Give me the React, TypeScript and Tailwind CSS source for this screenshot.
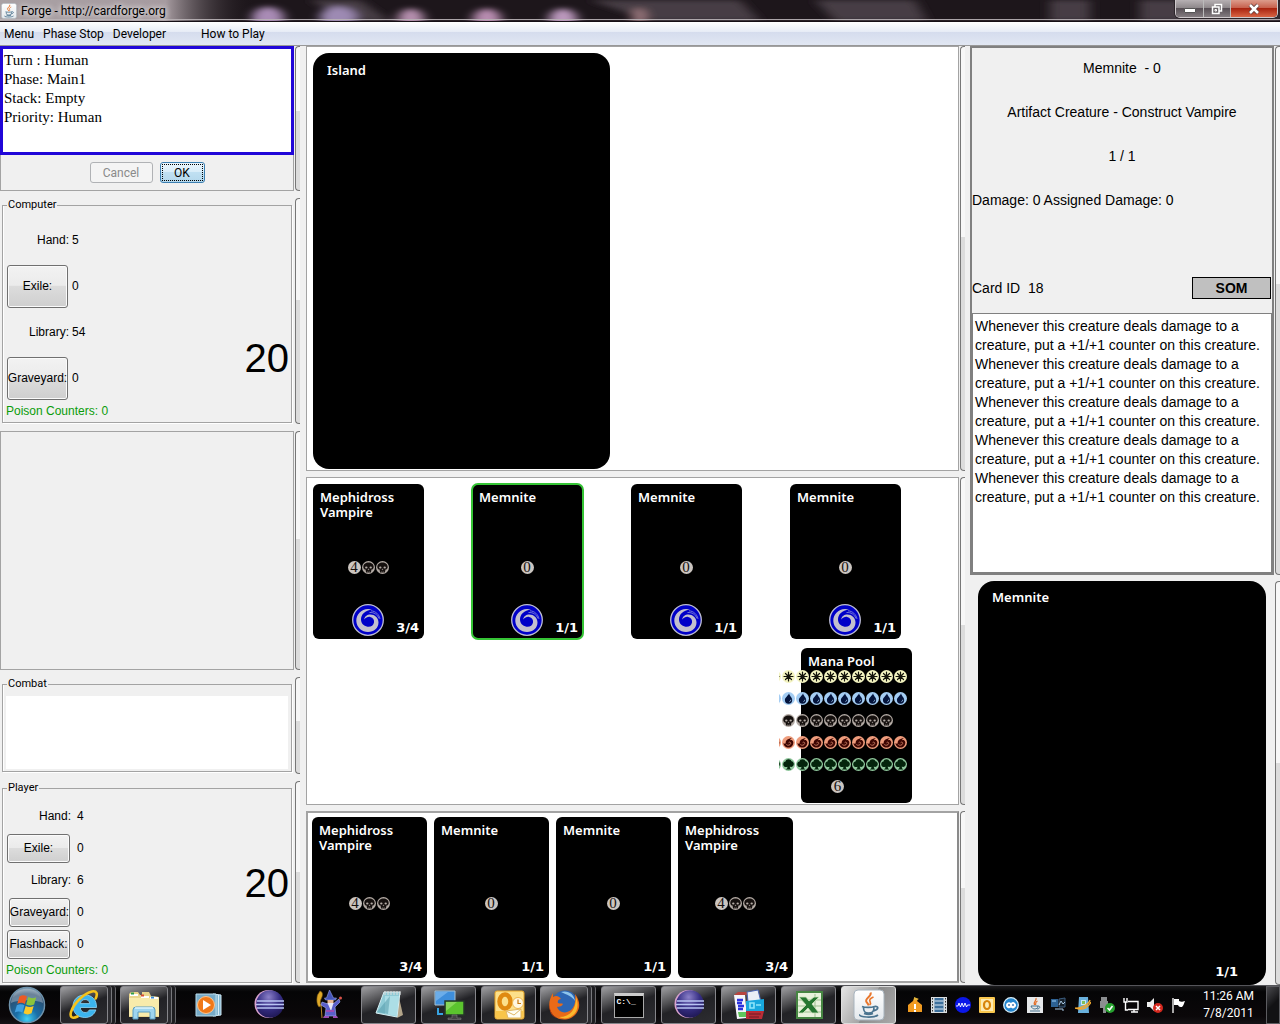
import React from "react";

type ManaKind = "W" | "U" | "B" | "R" | "G";

const MANA_COLORS: Record<ManaKind, { bg: string; fg: string }> = {
  W: { bg: "#f3f3c0", fg: "#14140c" },
  U: { bg: "#a4cdf3", fg: "#04143c" },
  B: { bg: "#b3aaa4", fg: "#15100e" },
  R: { bg: "#ee9c7c", fg: "#3c0602" },
  G: { bg: "#8fc79c", fg: "#04240c" },
};

function ManaIcon({ kind }: { kind: ManaKind }) {
  const { bg, fg } = MANA_COLORS[kind];
  return (
    <svg viewBox="0 0 14 14" className="h-3.5 w-3.5 shrink-0" aria-label={kind}>
      <circle cx="6.5" cy="6.5" r="6.5" fill={bg} />
      <g transform="translate(-.5 -.5)">
        {kind === "W" && (
          <g stroke={fg} strokeWidth="1.2" strokeLinecap="round">
            <path d="M7 2.500v9M2.500 7h9M4 4l6 6M10 4l-6 6" />
            <circle cx="7" cy="7" r="2" fill={fg} stroke="none" />
          </g>
        )}
        {kind === "U" && (
          <g>
            <path d="M7.600 1.800C7.500 4 10.700 5.700 10.700 8.500A3.600 3.600 0 0 1 3.400 8.500C3.400 5.900 6.700 4.500 7.600 1.800z" fill={fg} />
            <path d="M9.300 8.200q0 1.700-1.500 2" stroke={bg} strokeWidth=".7" fill="none" />
          </g>
        )}
        {kind === "B" && (
          <g>
            <path d="M7 2C4 2 1.800 3.800 1.800 6.400c0 1.600.8 2.400 2.200 2.700l.6 2.900h4.800L10 9.100c1.400-.3 2.200-1.100 2.200-2.700C12.200 3.800 10 2 7 2z" fill={fg} />
            <ellipse cx="4.800" cy="7" rx="1.200" ry=".9" fill={bg} />
            <ellipse cx="9.200" cy="7" rx="1.200" ry=".9" fill={bg} />
            <path d="M7 8.300l-.5.900h1zM6.200 10.600v1.300M7.800 10.600v1.300" fill={bg} stroke={bg} strokeWidth=".4" />
          </g>
        )}
        {kind === "R" && (
          <g>
            <path d="M11.800 6.500C12 10 9.900 12 7 12S2 10.200 2 7.500c1 .9 1.700.8 2.200.2C4 4.900 6 3.200 10.700 2.200 9 3.200 8.600 4 8.600 4.800c1.300-.6 2.400-.2 3.200 1.700z" fill={fg} />
            <path d="M4.800 9c1.500 1.300 3.900.9 4.400-1 .3-1.300-1.500-1.900-2.100-.8" stroke={bg} strokeWidth=".7" fill="none" />
          </g>
        )}
        {kind === "G" && (
          <path
            d="M7 1.700c1.600 0 2.600.7 3 2 1.400.2 2.400 1.400 2.300 2.900 0 1.700-1.200 2.900-2.800 2.900l-1.200-.4.2 1.600 1.400 1.300H4.300l1.500-1.300.1-1.500C5.200 9.700 4.600 9.600 3.900 9.500 2.500 9.300 1.700 8.200 1.700 6.800c0-1.600.9-2.700 2.300-2.900C4.300 2.500 5.400 1.700 7 1.700z"
            fill={fg}
          />
        )}
      </g>
    </svg>
  );
}

function GenericMana({ n }: { n: number }) {
  return (
    <span className="mr-px flex h-[13px] w-[13px] shrink-0 items-center justify-center rounded-full bg-[#cbc5c0] font-['Liberation_Serif',serif] text-[15px] leading-[13px] font-normal text-[#15100e]">
      {n}
    </span>
  );
}

function Swirl() {
  return (
    <svg viewBox="0 0 32 32" className="mr-px h-8 w-8" aria-label="Summoning sickness">
      <circle cx="16" cy="16" r="15.300" fill="#0000c8" stroke="#bdbdd4" strokeWidth="1.300" />
      <path
        d="M20 5.500C11 3 4 9.500 4.300 17 4.600 23.500 10 28 16 28c6 0 10.500-4 10.500-9.500 0-5-4-8-8-8-3.500 0-6 2-6.300 5 1.800-2.300 4-3 6-2.600 2.800.6 4.300 2.800 3.800 5.600-.5 3-3.300 4.700-6.500 4.200C11.500 22 9 19 9 15.500 9 10.500 13 6.300 20 5.500z"
        fill="#c3c0cf"
      />
      <path d="M19 6.800c4.500.3 8 3.500 9 8M17.500 8.500c4.500-.3 8 2 9.500 6" stroke="#8f90dd" strokeWidth=".8" fill="none" />
    </svg>
  );
}

type CardProps = {
  name: string;
  generic?: number;
  black?: number;
  pt?: string;
  sick?: boolean;
  selected?: boolean;
  size: string;
};

function Card({ name, generic, black = 0, pt, sick, selected, size }: CardProps) {
  return (
    <article
      className={`relative shrink-0 rounded-md bg-black px-[7px] py-1.5 font-['Noto_Sans',sans-serif] text-[13px] leading-[15px] font-semibold text-white ${size} ${
        selected ? "outline-2 -outline-offset-1 outline-[#35c435]" : ""
      }`}
    >
      <h3 className="w-24">{name}</h3>
      {generic !== undefined && (
        <div className="absolute inset-x-0 top-1/2 flex justify-center">
          <span className="-mt-px flex">
            <GenericMana n={generic} />
            {Array.from({ length: black }, (_, i) => (
              <ManaIcon key={i} kind="B" />
            ))}
          </span>
        </div>
      )}
      {sick && (
        <div className="absolute inset-x-0 bottom-[3px] flex justify-center">
          <Swirl />
        </div>
      )}
      {pt && <div className="absolute right-[5px] bottom-1 font-['DejaVu_Sans',sans-serif] text-[13px]">{pt}</div>}
    </article>
  );
}

const POOL: ManaKind[] = ["W", "U", "B", "R", "G"];

function ManaPool() {
  return (
    <div className="relative">
      <Card name="Mana Pool" size="h-[155px] w-[111px]" />
      <div className="absolute top-[22px] right-1 flex w-[129px] flex-col gap-2">
        {POOL.map((k) => (
          <div key={k} className={`flex justify-end overflow-hidden ${k === "B" ? "pr-3.5" : ""}`}>
            {Array.from({ length: k === "B" ? 8 : 10 }, (_, i) => (
              <ManaIcon key={i} kind={k} />
            ))}
          </div>
        ))}
        <div className="flex pl-[52px]">
          <GenericMana n={6} />
        </div>
      </div>
    </div>
  );
}

function Splitter() {
  return (
    <div className="w-[5px] shrink-0 rounded-l-sm border-y border-l border-[#777] bg-[linear-gradient(#f7f7f7_45%,#dcdcdc_45%)]" />
  );
}

function Panel({ grow, children }: { grow: string; children: React.ReactNode }) {
  return (
    <section className={`flex min-h-0 gap-px ${grow}`}>
      <div className="flex min-w-0 flex-1 flex-col">{children}</div>
      <Splitter />
    </section>
  );
}

function Group({ title, children }: { title: string; children?: React.ReactNode }) {
  return (
    <fieldset className="mr-[2px] ml-0.5 flex min-h-0 min-w-0 flex-1 flex-col border border-[#a3a3a3] shadow-[inset_1px_0_white,1px_1px_white]">
      <legend className="ml-1 px-px font-['Roboto',sans-serif] text-[11px] leading-[14px]">{title}</legend>
      {children}
    </fieldset>
  );
}

const SWING_BTN =
  "rounded-[3px] border border-[#707070] bg-[linear-gradient(#f2f2f2,#ebebeb_47%,#dcdcdc_50%,#cfcfcf)] shadow-[inset_0_0_0_1px_#fbfbfb] whitespace-nowrap";

type Stat = { label: string; value: number; button?: boolean; narrow?: boolean };

function Stats({ stats, tall }: { stats: Stat[]; tall?: boolean }) {
  return (
    <div className="relative flex min-h-0 flex-1 justify-between">
      <div className="flex flex-1 flex-col pt-[5px] pl-1 text-[12px]">
        {stats.map((s) => (
          <div key={s.label} className={`flex items-center ${tall ? "h-[46px] gap-[3px]" : "h-8 gap-1.5"}`}>
            <div className={`flex justify-end ${tall ? "w-[62px]" : "w-16"}`}>
              {s.button ? (
                <button
                  className={`${SWING_BTN} ${tall ? "mr-px h-[43px] w-[61px]" : s.narrow ? "mr-px h-[29px] w-[61px]" : "mr-px h-[29px] w-[63px]"}`}
                >
                  <span className="-mx-1">{s.label}</span>
                </button>
              ) : (
                <span>{s.label}</span>
              )}
            </div>
            <span>{s.value}</span>
          </div>
        ))}
        <div className="-ml-px text-[12px] leading-5 text-[#0a9c0a]">Poison Counters: 0</div>
      </div>
      <div className={`pr-0.5 text-[40px] leading-10 ${tall ? "mb-11 self-end" : "mb-3 self-center"}`}>20</div>
    </div>
  );
}

function TitleBar() {
  return (
    <header className="relative flex h-[22px] shrink-0 items-center overflow-hidden border-b border-[#171016] bg-[#1d161b] font-['Roboto',sans-serif]">
      <svg className="absolute inset-0 h-full w-full" viewBox="0 0 1280 22" preserveAspectRatio="none" aria-hidden="true">
        <defs>
          <filter id="haze" x="-20%" y="-100%" width="140%" height="300%">
            <feGaussianBlur stdDeviation="6 3" />
          </filter>
          <linearGradient id="titleGlow">
            <stop offset="0" stopColor="#a9a1a4" />
            <stop offset=".65" stopColor="#a69ba0" />
            <stop offset="1" stopColor="#1d161b" stopOpacity="0" />
          </linearGradient>
        </defs>
        <g filter="url(#haze)">
          <path d="M310 0h50l30 22h-40zM590 0h150l20 22H650zM815 0h100l12 22H835zM1050 0h40v22h-40zM1140 0h140v22h-140z" fill="#463d44" />
          <ellipse cx="268" cy="19" rx="16" ry="12" fill="#a98bb5" />
          <ellipse cx="338" cy="18" rx="18" ry="11" fill="#9d8ab3" />
          <ellipse cx="411" cy="20" rx="13" ry="11" fill="#b58fae" />
          <ellipse cx="487" cy="20" rx="14" ry="11" fill="#b88cb0" />
          <ellipse cx="563" cy="20" rx="14" ry="11" fill="#bb98bd" />
          <ellipse cx="639" cy="18" rx="7" ry="10" fill="#98767c" />
        </g>
        <rect width="255" height="22" fill="url(#titleGlow)" />
        <path d="M0 20.500h1280" stroke="#b9b2b6" />
      </svg>
      <div className="relative flex flex-1 items-center gap-1 pl-px">
        <JavaIcon cls="h-4 w-4" />
        <h1 className="text-[12px] leading-4 text-black [text-shadow:0_0_6px_white,0_0_6px_#fff8]">Forge - http://cardforge.org</h1>
      </div>
      <div className="relative mr-0.5 flex h-[18px] self-start overflow-hidden rounded-b-[5px] border border-t-0 border-[#cfc9cc] shadow-[0_0_0_1px_#2c252a]">
        <button aria-label="Minimize" className="flex w-7 items-center justify-center border-r border-[#bbb] bg-[linear-gradient(#b6b0b3,#8a8487_50%,#585056_50%,#837c80)]">
          <span className="mt-1 h-[5px] w-3 rounded-[1px] border border-[#555] bg-white" />
        </button>
        <button aria-label="Restore" className="flex w-[27px] items-center justify-center border-r border-[#bbb] bg-[linear-gradient(#b6b0b3,#8a8487_50%,#585056_50%,#837c80)]">
          <svg viewBox="0 0 12 12" className="h-3 w-3" fill="#6a6468" stroke="white" strokeWidth="1.500">
            <path d="M4 1.500h6.500v6.500H4z" />
            <path d="M1.500 4h6.500v6.500H1.500z" />
            <path d="M4 6.500h1.500v1.500H4z" strokeWidth="1" />
          </svg>
        </button>
        <button aria-label="Close" className="flex w-[46px] items-center justify-center bg-[linear-gradient(#dc9c8c,#c65e4a_48%,#a92410_50%,#d86444)]">
          <svg viewBox="0 0 12 12" className="h-3 w-3">
            <path d="M2 2l8 8M10 2l-8 8" stroke="#5b3a38" strokeWidth="4" />
            <path d="M2 2l8 8M10 2l-8 8" stroke="white" strokeWidth="2.500" />
          </svg>
        </button>
      </div>
    </header>
  );
}

function JavaIcon({ cls }: { cls: string }) {
  return (
    <svg viewBox="0 0 32 32" className={cls} aria-hidden="true">
      <defs>
        <linearGradient id="javaTile" x2="0" y2="1">
          <stop offset="0" stopColor="#fff" />
          <stop offset="1" stopColor="#e3e8ec" />
        </linearGradient>
      </defs>
      <rect x="1" y="1" width="30" height="30" rx="4" fill="url(#javaTile)" stroke="#a8b4be" />
      <path d="M17.500 3.500c2 4-6.500 5.500-4 9.500.6 1 1.600 1.800 2.200 3.500" stroke="#e8762c" strokeWidth="2" fill="none" />
      <path d="M20.500 8c-3.500 1.500-4.600 3-3.300 5 .6 1 .5 2-.6 3" stroke="#e8762c" strokeWidth="1.600" fill="none" />
      <path d="M9 17.500c3 1.300 9.500 1.200 12.500 0M10.500 18.500c0 5 2 5.500 5 5.500s5.500-.5 5.500-5.500M21.500 17.500c4.500-.8 4.500 3-1 4.500M11 24.500c3 1 6.500 1 9 0M7 25.500c-2 2.800 14 3.700 18 .5" stroke="#4b748f" strokeWidth="1.700" fill="none" />
    </svg>
  );
}

const MENUS = ["Menu", "Phase Stop", "Developer"];

function MenuBar() {
  return (
    <nav className="flex h-6 shrink-0 items-center border-b border-[#989898] bg-[linear-gradient(#fff,#e7ecf6_42%,#d5dced_43%,#e1e7f3)] pl-1 font-['Roboto',sans-serif] text-[12px]">
      <div className="flex flex-1 gap-[9px]">
        {MENUS.map((m) => (
          <button key={m}>{m}</button>
        ))}
        <button className="ml-[26px]">How to Play</button>
      </div>
    </nav>
  );
}

/* ---------- taskbar icons ---------- */

const BIG = "h-8 w-8";

const StartOrb = () => (
  <svg viewBox="0 0 40 40" className="h-[38px] w-[38px]" aria-hidden="true">
    <defs>
      <radialGradient id="orb" cx=".5" cy=".9" r=".9">
        <stop offset="0" stopColor="#3fd0f4" />
        <stop offset=".35" stopColor="#1a6fa8" />
        <stop offset=".8" stopColor="#2c4c6c" />
        <stop offset="1" stopColor="#8ba7bb" />
      </radialGradient>
    </defs>
    <circle cx="20" cy="20" r="18.500" fill="url(#orb)" stroke="#6f93ac" strokeWidth="1.500" />
    <path d="M3 18C4 8 11 3 20 3s16 5 17 15c-8-4-26-4-34 0z" fill="#fff" opacity=".3" />
    <path d="M12 11c3-1.800 5.500-1.500 8 .1l-2.200 7.800c-2.700-1.600-5-1.700-8-.1z" fill="#ec5a24" />
    <path d="M21.300 11.700c3 1.700 5.500 1.500 8.400.1l-2.200 7.700c-3 1.500-5.500 1.400-8.400-.1z" fill="#8cc43c" />
    <path d="M9.300 20.200c3-1.600 5.400-1.400 8 .1l-2.200 7.700c-2.600-1.600-5-1.700-8-.1z" fill="#3f9fe0" />
    <path d="M18.600 21c3 1.700 5.500 1.500 8.400.1l-2.200 7.700c-3 1.500-5.500 1.400-8.400-.1z" fill="#fbc927" />
  </svg>
);

const IeIcon = () => (
  <svg viewBox="0 0 32 32" className={BIG}>
    <path d="M28.500 18.500H12.300c.3 3.200 2 5 4.800 5 2 0 3.500-.9 4.300-2.600h6.500c-1.700 5-5.500 7.600-11 7.600C9.800 28.500 5 24 5 17.300 5 10.700 9.800 6 16.800 6c7.300 0 12 4.700 11.700 12.500zM12.400 14.600h9.300c-.3-2.600-2-4.100-4.600-4.100s-4.300 1.500-4.700 4.100z" fill="#3bb4ee" stroke="#8fd6f7" strokeWidth=".8" />
    <path d="M27.700 9.500C30 4.500 28.500 1.500 24 2.500 16 4.200 5.500 14.500 3 23c-1.500 5.500 1.500 7 6.500 4.500" stroke="#f5c21b" strokeWidth="2.600" fill="none" strokeLinecap="round" />
  </svg>
);

const ExplorerIcon = () => (
  <svg viewBox="0 0 34 32" className="h-8 w-[34px]">
    <path d="M2 28V5l2-2h7l2 3h2V3h7l2 4h2V7l6 1v20z" fill="#ead58c" />
    <path d="M2 9h30v18H2z" fill="#f8ebab" />
    <path d="M3 6h8M14 8h8M23 9h8" stroke="#fff" strokeWidth="2" />
    <path d="M4 4.500h3" stroke="#2e9c4c" strokeWidth="2" />
    <path d="M14 6.500h3" stroke="#d84b31" strokeWidth="2" />
    <path d="M24 8.500h3" stroke="#3a8bd3" strokeWidth="2" />
    <path d="M6 30V21q0-3 3-3h16q3 0 3 3v9h-5v-7H11v7z" fill="#9ed5ef" stroke="#5a9dc2" />
    <path d="M8 19h18" stroke="#def4fd" strokeWidth="1.500" />
  </svg>
);

const WmpIcon = () => (
  <svg viewBox="0 0 28 28" className="h-7 w-7">
    <path d="M18 3l8 1v20l-8 1z" fill="#86b8d2" stroke="#cfe8f4" />
    <path d="M1 3h20v22H1z" fill="#77abc8" stroke="#b9dcec" />
    <path d="M23.500 4v20" stroke="#d8eef8" />
    <circle cx="11" cy="14" r="8.500" fill="#f07818" stroke="#ffc48e" />
    <path d="M8 9l8 5-8 5z" fill="#fff" />
  </svg>
);

const EclipseIcon = () => (
  <svg viewBox="0 0 32 32" className={BIG}>
    <defs>
      <radialGradient id="moon" cx=".45" cy=".25" r=".8">
        <stop offset="0" stopColor="#8b80c8" />
        <stop offset=".5" stopColor="#372f85" />
        <stop offset="1" stopColor="#1c154f" />
      </radialGradient>
    </defs>
    <circle cx="15.500" cy="15" r="14" fill="#d9a3cf" />
    <circle cx="17" cy="15" r="13.800" fill="url(#moon)" />
    <path d="M4 12h27M3 15.500h28M4 19h27" stroke="#b8c4f2" strokeWidth="1.300" />
  </svg>
);

const WizardIcon = () => (
  <svg viewBox="0 0 28 32" className="h-8 w-7">
    <path d="M5 2c3 1 3 4 1.500 7S5 14 6 17l-2 1C1.500 15 1.500 10 2.500 6z" fill="#dea928" stroke="#7d5a12" strokeWidth=".6" />
    <path d="M6 15l1 14" stroke="#b8882a" strokeWidth="1" />
    <path d="M14.500 1l4 8h3l-1 2H10.500l-1-2h2z" fill="#4454b9" stroke="#96a4ec" strokeWidth=".6" />
    <path d="M12.500 11h6v4h-6z" fill="#edb995" />
    <path d="M7 13l6 2h5l6-5 1 3-5 5 1 9H10l1-8-5-3z" fill="#5a5fcb" stroke="#a5b1f3" strokeWidth=".6" />
    <path d="M12.500 14h6l-2.500 8z" fill="#e8e8f6" />
    <path d="M11 21h8v2h-8zM9 27h5v2H8zM18 27h4l1 2h-5z" fill="#9e4cb2" />
    <circle cx="25.500" cy="9" r="1.500" fill="#d8534a" />
  </svg>
);

const NotepadIcon = () => (
  <svg viewBox="0 0 32 32" className={BIG}>
    <path d="M25 4l5 22-6 3z" fill="#b3a58a" />
    <path d="M11 3h16l-3 25L3 24z" fill="#8fcbd6" stroke="#d7eff3" />
    <path d="M12 7h14l-2 20-12-2z" fill="#b8e6ed" opacity=".7" />
    <path d="M17 7L4 23l11 2z" fill="#4d96a5" opacity=".5" />
    <path d="M12 2v4M15 2v4M18 2v4M21 2v4M24 2v4M27 2v4" stroke="#ddd" />
  </svg>
);

const MonitorsIcon = () => (
  <svg viewBox="0 0 32 32" className={BIG}>
    <path d="M2 2h20v14H2z" fill="#3e8edb" stroke="#a7c0cf" />
    <path d="M3 3h12L3 12z" fill="#8bc2f1" opacity=".6" />
    <path d="M12 12h19v14H12z" fill="#5bc42e" stroke="#26372a" strokeWidth="1.500" />
    <path d="M13 13h11L13 22z" fill="#a5e576" opacity=".6" />
    <path d="M19 26h5v3h4v1.500H15V29h4z" fill="#444" stroke="#888" strokeWidth=".5" />
    <path d="M5 19v6h5" stroke="#37a3e2" strokeWidth="2" fill="none" />
  </svg>
);

const OutlookIcon = () => (
  <svg viewBox="0 0 32 32" className={BIG}>
    <rect x="2" y="2" width="29" height="28" rx="2" fill="#fce08a" stroke="#e7a323" />
    <path d="M3 22h27v7H3z" fill="#f9c549" />
    <ellipse cx="12" cy="12.500" rx="5.500" ry="7" fill="none" stroke="#e08a10" strokeWidth="4.500" />
    <circle cx="25" cy="14" r="5.500" fill="#fff7e2" stroke="#edb44c" />
    <path d="M25 10.500v4h3" stroke="#c8760d" strokeWidth="1.200" fill="none" />
    <path d="M13 22l15-2v9H15z" fill="#fffdf4" stroke="#e0b665" />
    <path d="M13 22l8 4 7-6" stroke="#e0b665" fill="none" />
  </svg>
);

const FirefoxIcon = () => (
  <svg viewBox="0 0 32 32" className={BIG}>
    <circle cx="17" cy="14" r="12.500" fill="#2d66b4" />
    <path d="M13 3c7-2 13 2 14 9-3-5-8-6-14-9z" fill="#8ec5ec" />
    <path d="M27 5c7 9 5 19-4 24-9 4-18 0-21-8-2-6 0-12 3-17v4c3-2 6-1 8 2-2 0-4 2-3 4 2 1 4 0 5 1-2 4-5 2-6 3 2 6 9 7 14 3 4-4 5-9 4-16z" fill="#e96a18" />
    <path d="M28 8c3 7 2 15-4 19-4 3-9 3-13 1 12 0 17-8 17-20z" fill="#fbb92e" />
    <path d="M2 14c-1 7 2 12 7 15-5-1-9-7-7-15z" fill="#b83a10" />
  </svg>
);

const CmdIcon = () => (
  <span className="block h-[25px] w-[30px] border border-[#aaa] border-t-[3px] border-t-[#ccc] bg-black pt-0.5 pl-0.5 text-left font-['Liberation_Mono',monospace] text-[8px] leading-[8px] font-bold text-white">
    C:\_
  </span>
);

const PackIcon = () => (
  <svg viewBox="0 0 34 32" className="h-8 w-[34px]">
    <path d="M2 6l4-3h20l-4 3z" fill="#b8453f" />
    <path d="M2 6h11l2 23-10 1z" fill="#f5f5fa" />
    <path d="M15 3l11-2 3 12H16z" fill="#e9eef6" stroke="#4b66b5" />
    <path d="M14 12l18-2v12H14z" fill="#18a7dd" />
    <path d="M14 22h18l-2 8H14z" fill="#ba2c36" />
    <path d="M5 11h6M5 14h5M6 17h6M6 20h5" stroke="#2b33dd" strokeWidth="2.500" />
    <path d="M6 23h8v5H7z" fill="#5fc65b" />
    <path d="M18 14h4v5h-4zM24 16h5" stroke="#8fe6fa" strokeWidth="1.600" fill="none" />
    <path d="M17 25h12M17 28h10" stroke="#6f1a24" strokeWidth="1" />
  </svg>
);

const ExcelIcon = () => (
  <svg viewBox="0 0 32 32" className={BIG}>
    <path d="M4 3h25v26H4z" fill="#e9f2dc" stroke="#468542" strokeWidth="2" />
    <path d="M22 5v23M5 11h23M5 17h23M5 23h23" stroke="#9dbf8f" />
    <path d="M6 8h7l3 4 5-4h5l-7 7 7 9h-7l-4-5-5 5H5l8-8z" fill="#25762f" stroke="#cfe4bd" strokeWidth=".8" />
  </svg>
);

type Task = { label: string; icon: React.ReactNode; open?: boolean; stacked?: boolean; active?: boolean };

const TASKS: Task[] = [
  { label: "Internet Explorer", icon: <IeIcon />, open: true, stacked: true },
  { label: "Windows Explorer", icon: <ExplorerIcon />, open: true, stacked: true },
  { label: "Media Player", icon: <WmpIcon /> },
  { label: "Eclipse", icon: <EclipseIcon /> },
  { label: "Wizard", icon: <WizardIcon /> },
  { label: "Notepad", icon: <NotepadIcon />, open: true },
  { label: "Remote Desktop", icon: <MonitorsIcon />, open: true },
  { label: "Outlook", icon: <OutlookIcon />, open: true },
  { label: "Firefox", icon: <FirefoxIcon />, open: true, stacked: true },
  { label: "Command Prompt", icon: <CmdIcon />, open: true },
  { label: "Eclipse workspace", icon: <EclipseIcon />, open: true },
  { label: "Archive", icon: <PackIcon />, open: true },
  { label: "Excel", icon: <ExcelIcon />, open: true },
  { label: "Forge", icon: <JavaIcon cls="h-8 w-8" />, open: true, active: true },
];

function TaskButton({ t }: { t: Task }) {
  const face = t.active
    ? "border border-[#ddd] bg-[linear-gradient(120deg,#e4e4e4,#a5a5a5_50%,#8c8c8c_51%,#aaa)]"
    : t.open
      ? "border border-[#85858a] bg-[linear-gradient(160deg,#a0a0a3,#4a4a4d_35%,#222226_50%,#2d2d31)]"
      : "";
  return (
    <div className={`flex w-[60px] shrink-0 pr-1 ${t.stacked ? "" : "pl-px"}`}>
      <button aria-label={t.label} className={`flex h-[38px] flex-1 items-center justify-center rounded-[3px] ${face}`}>
        {t.icon}
      </button>
      {t.stacked && (
        <span className="flex h-[38px]">
          <span className="w-1 rounded-r-[3px] border-r border-[#77777b] bg-[#2c2c30]" />
          <span className="w-1 rounded-r-[3px] border-r border-[#66666a] bg-[#1d1d20]" />
        </span>
      )}
    </div>
  );
}

const TRAY: { label: string; art: React.ReactNode }[] = [
  { label: "Alert", art: <><path d="M1 8l5-4 1-3 4 1-1 2 5 4v7H1z" fill="#f19a20" /><path d="M7 4V0l5 2z" fill="#e2b43a" /><path d="M8 7v5M8 13v2" stroke="#fff" strokeWidth="2" /></> },
  { label: "Video", art: <><path d="M0 0h16v16H0z" fill="#d9dde0" /><path d="M3.500 1h9v14h-9z" fill="#3c6f9c" /><path d="M3.500 4h9M3.500 8h9M3.500 12h9" stroke="#dbe9f3" /><path d="M1.500 1v14M14.500 1v14" stroke="#333" strokeDasharray="1.500 1.500" /></> },
  { label: "Monitor", art: <><circle cx="8" cy="8" r="8" fill="#0b17e8" /><path d="M1 9h2l1-3 1.500 4L7 6l1.500 4L10 6l1.500 4 1-2H15" stroke="#fff" strokeWidth=".9" fill="none" /></> },
  { label: "Outlook", art: <><rect width="16" height="16" rx="1" fill="#f9c74e" /><path d="M2 2h12v12H2z" fill="#fdeab0" /><ellipse cx="8" cy="8" rx="3" ry="4" fill="none" stroke="#d88408" strokeWidth="2.200" /></> },
  { label: "Sync", art: <><circle cx="8" cy="8" r="7.300" fill="#2386cf" stroke="#d8edf9" strokeWidth="1.300" /><path d="M3 8a3 3 0 0 1 5-2 3 3 0 1 1 0 4.500A3 3 0 0 1 3 8z" fill="#fff" /><path d="M5.200 8h1.600M9.200 8h1.600" stroke="#16589d" strokeWidth="1.600" /></> },
  { label: "Java", art: <><rect width="16" height="16" fill="#e6e8ea" /><path d="M9 1c1 3-3 3-1.500 7M10.500 4C8 5 9 6 8.500 8" stroke="#e46c24" fill="none" strokeWidth="1.200" /><path d="M4 9h7c0 4-6 4-7 0M11 9c3 0 2 3-1 3M3 14h10" stroke="#44708d" fill="none" /></> },
  { label: "Network", art: <><path d="M0 2h7v8H0z" fill="#2d6193" /><path d="M1 4h4" stroke="#9ed2fb" /><path d="M8 2l6-1v9H8z" fill="#16202a" stroke="#3c5f82" /><path d="M8 8l2-4 2 3 2-2M4 12h8v2" stroke="#aac8e3" fill="none" /></> },
  { label: "Update", art: <><path d="M4 0h9l1 16H3z" fill="#69b0dc" /><path d="M6 3h5v5H6z" fill="#c6e6f4" /><path d="M7 4h3v3H7z" fill="#7fbf5a" /><path d="M0 11C4 12 14 8 15 3M1 11c6 3 13-1 15-6" stroke="#f0a830" fill="none" strokeWidth="1.400" /></> },
  { label: "USB", art: <><path d="M2 0h6v4H2zM1 4h8v7H7v5H4v-5H1z" fill="#8b8e90" /><circle cx="11" cy="11" r="5" fill="#27a12f" /><path d="M8.500 11l2 2 3-4" stroke="#fff" strokeWidth="1.600" fill="none" /></> },
  { label: "Wired network", art: <><path d="M5 4.500h10v8H5M8 15h7M11 13v2M1 1v4h3V1M2.500 5v8H5" stroke="#fff" fill="none" strokeWidth="1.400" /></> },
  { label: "Volume muted", art: <><path d="M0 5h3l4-4v13l-4-4H0z" fill="#eee" /><circle cx="11" cy="11" r="5" fill="#d5281e" /><path d="M9 9l4 4M13 9l-4 4" stroke="#fff" strokeWidth="1.500" /></> },
  { label: "Action center", art: <><path d="M2 1v15" stroke="#fff" strokeWidth="1.300" /><path d="M3 2h5v2c2 1 3 1 6 0-1 2-1 4-3 6-2 0-3 0-4-2H3z" fill="#fff" /></> },
];

function Taskbar() {
  return (
    <footer className="flex h-[39px] shrink-0 overflow-hidden border-t border-[#55555a] bg-[linear-gradient(#1b1b1d,#050506_15%,#0a0709_80%,#151316)] text-white">
      <button aria-label="Start" className="flex w-[60px] shrink-0 items-center pl-2">
        <StartOrb />
      </button>
      <div className="flex min-w-0">
        {TASKS.map((t) => (
          <TaskButton key={t.label} t={t} />
        ))}
      </div>
      <div className="flex flex-1 items-center justify-end gap-2">
        {TRAY.map((t) => (
          <svg key={t.label} viewBox="0 0 16 16" className="h-4 w-4 shrink-0" role="img" aria-label={t.label}>
            {t.art}
          </svg>
        ))}
      </div>
      <div className="flex w-[79px] shrink-0 flex-col justify-center pl-1 text-center font-['Roboto',sans-serif] text-[12px] leading-[17px]">
        <time>11:26 AM</time>
        <time>7/8/2011</time>
      </div>
      <button aria-label="Show desktop" className="w-3.5 shrink-0 border border-[#5c5c60] bg-[linear-gradient(135deg,#4a4a4e,#121214_50%)]" />
    </footer>
  );
}

const RULE = "Whenever this creature deals damage to a creature, put a +1/+1 counter on this creature.";

export default function App() {
  return (
    <div className="flex h-screen flex-col overflow-hidden bg-[#f0f0f0] font-['Liberation_Sans',sans-serif] text-black">
      <TitleBar />
      <MenuBar />
      <main className="flex min-h-0 flex-1">
        <aside className="flex w-[300px] shrink-0 flex-col gap-[7px] pb-0.5">
          <Panel grow="flex-145">
            <div className="flex-1 border-3 border-[#2006d8] bg-white px-px pt-0.5 font-['Liberation_Serif',serif] text-[15px] leading-[19px]">
              <p>Turn : Human</p>
              <p>Phase: Main1</p>
              <p>Stack: Empty</p>
              <p>Priority: Human</p>
            </div>
            <div className="flex h-9 items-center justify-center gap-[7px] border border-t-0 border-[#a3a3a3] font-['Roboto',sans-serif] text-[12px]">
              <button disabled className="h-[21px] w-[63px] rounded-[3px] border border-[#b0b2b5] bg-[#f4f4f4] text-[#8a8a8a]">
                Cancel
              </button>
              <button className="h-[21px] w-[45px] rounded-[3px] border border-[#3c7fb1] bg-[linear-gradient(#eaf5fc,#d8edf9_48%,#c0e0f2_50%,#b4d8ec)] p-px">
                <span className="flex h-full items-center justify-center border border-dotted border-black">OK</span>
              </button>
            </div>
          </Panel>
          <Panel grow="flex-226">
            <div className="flex min-h-0 flex-1 flex-col pb-px">
              <Group title="Computer">
                <Stats
                  tall
                  stats={[
                    { label: "Hand:", value: 5 },
                    { label: "Exile:", value: 0, button: true },
                    { label: "Library:", value: 54 },
                    { label: "Graveyard:", value: 0, button: true },
                  ]}
                />
              </Group>
            </div>
          </Panel>
          <Panel grow="flex-239">
            <div className="flex-1 border border-[#a3a3a3]" />
          </Panel>
          <Panel grow="flex-97">
            <div className="flex min-h-0 flex-1 flex-col pb-0.5">
              <Group title="Combat">
                <div className="mx-[3px] mt-[5px] mb-0.5 flex-1 bg-white" />
              </Group>
            </div>
          </Panel>
          <Panel grow="flex-202">
            <Group title="Player">
              <Stats
                stats={[
                  { label: "Hand:", value: 4 },
                  { label: "Exile:", value: 0, button: true },
                  { label: "Library:", value: 6 },
                  { label: "Graveyard:", value: 0, button: true, narrow: true },
                  { label: "Flashback:", value: 0, button: true },
                ]}
              />
            </Group>
          </Panel>
        </aside>

        <section className="ml-1.5 flex min-w-0 flex-1 flex-col gap-1.5 pb-0.5">
          <Panel grow="flex-425">
            <div className="flex min-h-0 flex-1 border border-[#a3a3a3] bg-white pt-1.5 pb-px pl-1.5">
              <article className="aspect-[297/416] h-full rounded-2xl bg-black px-3.5 py-2.5 font-['Noto_Sans',sans-serif] text-[13px] leading-[15px] font-semibold text-white">
                <h3>Island</h3>
              </article>
            </div>
          </Panel>
          <Panel grow="flex-328">
            <div className="flex flex-1 flex-col gap-[9px] border border-[#a3a3a3] bg-white pt-1.5 pl-1.5">
              <div className="flex gap-12">
                <Card name="Mephidross Vampire" generic={4} black={2} pt="3/4" sick size="h-[155px] w-[111px]" />
                <Card name="Memnite" generic={0} pt="1/1" sick selected size="h-[155px] w-[111px]" />
                <Card name="Memnite" generic={0} pt="1/1" sick size="h-[155px] w-[111px]" />
                <Card name="Memnite" generic={0} pt="1/1" sick size="h-[155px] w-[111px]" />
              </div>
              <div className="flex pl-[488px]">
                <ManaPool />
              </div>
            </div>
          </Panel>
          <Panel grow="flex-172">
            <div className="flex flex-1 gap-[7px] border-2 border-[#a3a3a3] border-r-[#8a8a8a] bg-white pt-1 pl-1">
              <Card name="Mephidross Vampire" generic={4} black={2} pt="3/4" size="h-[161px] w-[115px]" />
              <Card name="Memnite" generic={0} pt="1/1" size="h-[161px] w-[115px]" />
              <Card name="Memnite" generic={0} pt="1/1" size="h-[161px] w-[115px]" />
              <Card name="Mephidross Vampire" generic={4} black={2} pt="3/4" size="h-[161px] w-[115px]" />
            </div>
          </Panel>
        </section>

        <aside className="ml-[5px] flex w-[310px] shrink-0 flex-col gap-1.5">
          <Panel grow="flex-529">
            <div className="flex min-h-0 flex-1 flex-col border-2 border-[#808080] text-[14px]">
              <div className="flex flex-col text-center leading-[44px] whitespace-pre">
                <p className="-mt-0.5">Memnite  - 0</p>
                <p>Artifact Creature - Construct Vampire</p>
                <p>1 / 1</p>
                <p className="text-left">Damage: 0 Assigned Damage: 0</p>
                <div className="mt-11 flex items-center justify-between pr-px">
                  <span>Card ID  18</span>
                  <span className="w-[79px] border border-black bg-[#c0c0c0] leading-5 font-bold">SOM</span>
                </div>
              </div>
              <div className="mt-[3px] min-h-0 flex-1 overflow-hidden border border-[#808080] bg-white pt-[3px] pl-0.5 leading-[19px]">
                {Array.from({ length: 5 }, (_, i) => (
                  <p key={i}>{RULE}</p>
                ))}
              </div>
            </div>
          </Panel>
          <Panel grow="flex-404">
            <article className="mr-2 ml-2 flex flex-1 flex-col justify-between rounded-2xl bg-black pt-[9px] pr-7 pb-1.5 pl-3.5 font-['Noto_Sans',sans-serif] text-[13px] leading-[15px] font-semibold text-white">
              <h3>Memnite</h3>
              <div className="text-right font-['DejaVu_Sans',sans-serif]">1/1</div>
            </article>
          </Panel>
        </aside>
      </main>
      <Taskbar />
    </div>
  );
}
